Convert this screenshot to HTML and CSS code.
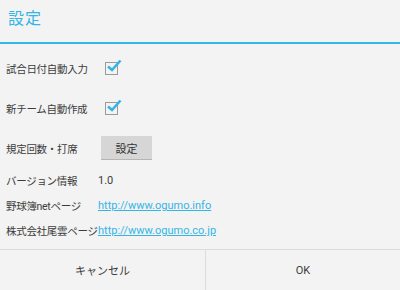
FILE: index.html
```html
<!DOCTYPE html>
<html lang="ja">
<head>
    <meta charset="UTF-8">
    <meta name="viewport" content="width=device-width, initial-scale=1.0">
    <title>設定</title>
    <link rel="stylesheet" href="styles.css">
</head>
<body>

<div class="dialog">
    <div class="title">設定</div>

    <div class="settings">
        <div class="row tall">
            <span class="label">試合日付自動入力</span>
            <span class="check">
                <svg width="16" height="14" viewBox="0 0 16 14"><path d="M2 7.5 L6 11 L14.5 1.5" fill="none" stroke="#33b5e5" stroke-width="2.6"/></svg>
            </span>
        </div>
        <div class="row tall">
            <span class="label">新チーム自動作成</span>
            <span class="check">
                <svg width="16" height="14" viewBox="0 0 16 14"><path d="M2 7.5 L6 11 L14.5 1.5" fill="none" stroke="#33b5e5" stroke-width="2.6"/></svg>
            </span>
        </div>
        <div class="row tall">
            <span class="label">規定回数・打席</span>
            <button class="btn">設定</button>
        </div>
        <div class="row">
            <span class="label">バージョン情報</span>
            <span class="value">1.0</span>
        </div>
        <div class="row">
            <span class="label">野球簿netページ</span>
            <a class="link" href="#">http://www.ogumo.info</a>
        </div>
        <div class="row">
            <span class="label">株式会社尾雲ページ</span>
            <a class="link" href="#">http://www.ogumo.co.jp</a>
        </div>
    </div>

    <div class="footer">
        <div class="action left">キャンセル</div>
        <div class="action">OK</div>
    </div>
</div>

</body>
</html>
```

FILE: styles.css
```css
body {
    margin: 0;
    background-color: #f3f3f3;
    font-family: Roboto, "Noto Sans CJK JP", sans-serif;
    color: #3c3c3c;
}
.dialog {
    width: 400px;
    height: 290px;
    display: flex;
    flex-direction: column;
}
.title {
    height: 42px;
    padding-left: 8px;
    font-size: 16px;
    letter-spacing: 1px;
    line-height: 38px;
    color: #33b5e5;
    border-bottom: 2px solid #33b5e5;
}
.settings {
    padding: 4px 0 0 6px;
    height: 195px;
}
.row {
    display: flex;
    align-items: center;
    height: 25px;
    font-size: 11px;
}
.row.tall {
    height: 40px;
}
.label {
    width: 92px;
    flex: none;
    font-size: 10.5px;
    letter-spacing: -0.3px;
    white-space: nowrap;
}
.check {
    position: relative;
    width: 11px;
    height: 11px;
    margin-left: 7px;
    border: 1px solid #9a9a9a;
}
.check svg {
    position: absolute;
    left: 0;
    top: -4px;
}
.btn {
    margin-left: 3px;
    width: 51px;
    height: 24px;
    border: none;
    border-bottom: 1px solid #b5b5b5;
    background-color: #d6d6d6;
    font-family: inherit;
    font-size: 11px;
    color: #333;
    padding: 0;
}
.link {
    color: #33b5e5;
    white-space: nowrap;
}
.footer {
    margin-top: 6px;
    display: flex;
    flex: 1;
    border-top: 1px solid #dcdcdc;
}
.action {
    flex: 1;
    display: flex;
    align-items: center;
    justify-content: center;
    font-size: 11px;
}
.action.left {
    flex: none;
    width: 205px;
    border-right: 1px solid #dcdcdc;
}
```
